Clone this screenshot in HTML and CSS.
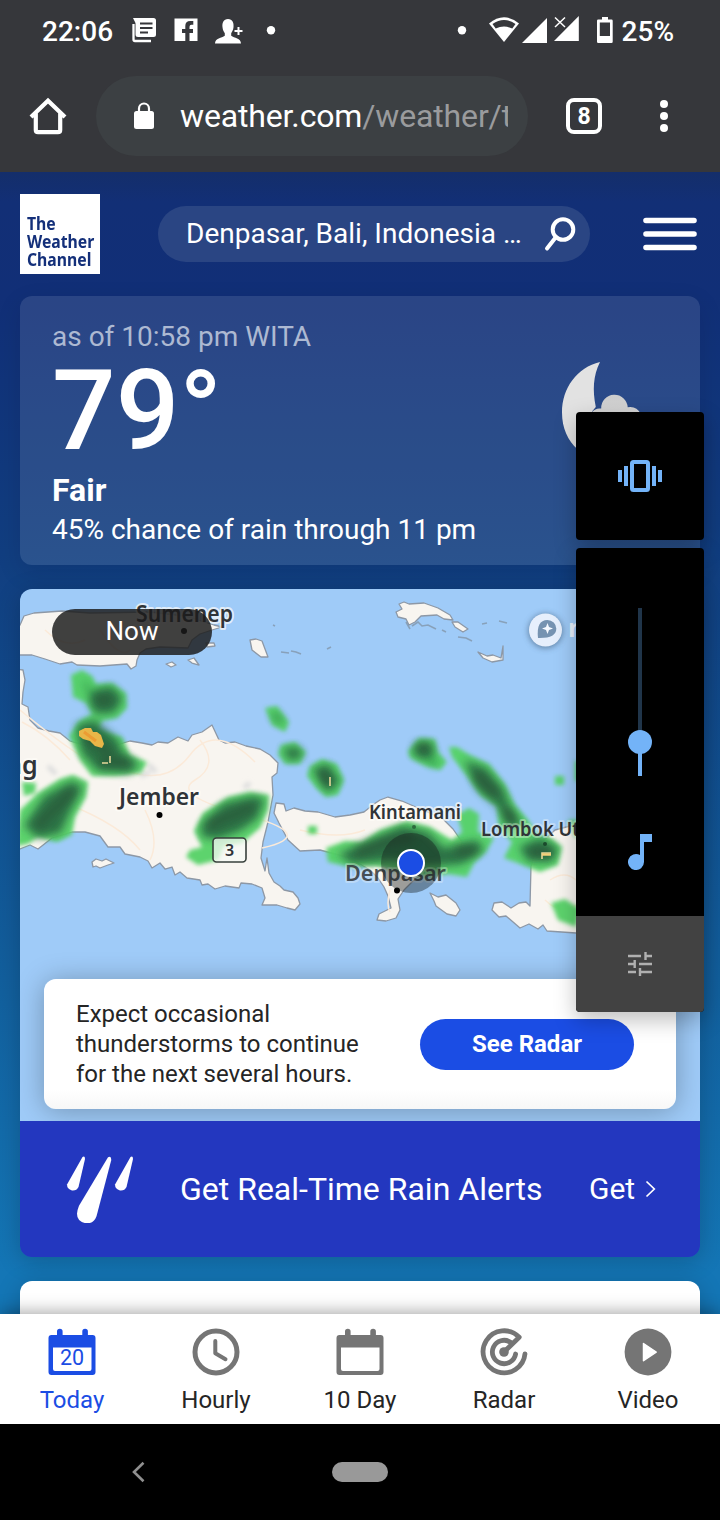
FILE: index.html
```html
<!DOCTYPE html>
<html lang="en">
<head>
<meta charset="utf-8">
<title>Denpasar, Bali, Indonesia - The Weather Channel</title>
<link rel="stylesheet" href="styles.css">
</head>
<body>
<div class="screen">
  <header class="chrome">
    <div class="status">
      <span class="status-text">22:06</span>
      <svg class="status-left" width="150" height="60" viewBox="126 0 150 60" fill="#fff">
        <path d="M133.500 24v15.500q0 1.500 1.500 1.500H151" fill="none" stroke="#fff" stroke-width="2.300"/>
        <path d="M133 18h20.500q2.500 0 2.500 2.500v14q0 2.500-2.500 2.500h-15.500q-2.500 0-2.500-2.500V23z"/>
        <path d="M140 23.500h12.500M140 28h12.500M140 32.500h8" stroke="#36373b" stroke-width="2"/>
        <path d="M174.500 18.500h23V41h-8v-8h3.500v-4h-3.500v-2.200q0-2 2-2h1.800V21h-3q-5 0-5 5v3H182v4h3.300v8h-10.800z"/>
        <path d="M228 19c4.500 0 6 3.800 5.500 8.300-.3 3-1.400 4.500-2.300 5.900v2.600c3 2.200 9.800 2.400 9.800 7.700h-26c0-5.300 6.800-5.500 9.800-7.700v-2.600c-1-1.400-2-2.900-2.300-5.900-.5-4.500 1-8.300 5.500-8.300z"/>
        <path d="M238.500 27v8M234.500 31h8" stroke="#fff" stroke-width="2"/>
        <circle cx="271" cy="30.200" r="4.200"/>
      </svg>
      <svg class="status-right" width="164" height="60" viewBox="456 0 164 60" fill="#fff">
        <circle cx="462" cy="30.200" r="4.200"/>
        <path d="M489 23.500Q504 11 519 23.500L504 42z"/>
        <path d="M492.500 24q11.500-8 23 0l-3.200 4.600q-8.300-4-16.600 0z" fill="#36373b"/>
        <path d="M547 18v25h-25z"/>
        <path d="M578.800 16v25H554z"/>
        <path d="M553 15h13v9l-7 6h-6z" fill="#36373b"/>
        <path d="M555 17.500l10 9.500M565 17.500L555 27" stroke="#fff" stroke-width="1.500"/>
        <path d="M602 17h6v2.500h3.500q1.200 0 1.200 1.200v21q0 1.200-1.200 1.200h-13.300q-1.200 0-1.200-1.200v-21q0-1.200 1.200-1.200h3.800zM599.800 22.500V36h10.200V22.500z" fill-rule="evenodd"/>
      </svg>
      <span class="status-text">25%</span>
    </div>
    <div class="toolbar">
      <svg width="40" height="40" viewBox="28 96 40 40" fill="none" stroke="#fff" stroke-width="4.200">
        <path d="M31 117l17-16.300L65 117M35.800 113v17q0 2.200 2.200 2.200h20q2.200 0 2.200-2.200v-17"/>
      </svg>
      <div class="url">
        <svg width="20" height="28" viewBox="134 102 20 28"><rect x="134" y="111" width="20" height="18" rx="2.500" fill="#fff"/><path d="M139 112v-3.500a5 5 0 0 1 10 0v3.500" fill="none" stroke="#fff" stroke-width="2.200"/></svg>
        <span class="url-text">weather.com<i>/weather/today</i></span>
      </div>
      <span class="tabs">8</span>
      <svg class="dots" width="8" height="32" viewBox="0 0 8 32" fill="#fff"><circle cx="4" cy="4" r="4"/><circle cx="4" cy="16" r="4"/><circle cx="4" cy="28" r="4"/></svg>
    </div>
  </header>

  <main class="page">
    <div class="masthead">
      <div class="logo"><span>The</span><span>Weather</span><span>Channel</span></div>
      <div class="search">
        <span>Denpasar, Bali, Indonesia …</span>
        <svg width="34" height="38" viewBox="543 215 34 38" fill="none" stroke="#fff" stroke-width="4" stroke-linecap="round"><circle cx="563" cy="229.500" r="10.300"/><path d="M556 237l-9 11.500"/></svg>
      </div>
      <svg class="burger" width="54" height="34" viewBox="0 0 54 34" stroke="#fff" stroke-width="5.600" stroke-linecap="round"><path d="M3 3.500h48M3 17h48M3 30.500h48"/></svg>
    </div>

    <section class="now-card">
      <div>
        <p class="asof">as of 10:58 pm WITA</p>
        <p class="temp">79°</p>
        <p class="phrase">Fair</p>
        <p class="rain">45% chance of rain through 11 pm</p>
      </div>
      <svg class="moon" width="112" height="112" viewBox="560 360 112 112">
        <defs><linearGradient id="cloud" x1="0" y1="0" x2="0" y2="1"><stop offset="0" stop-color="#cdcdcd"/><stop offset="1" stop-color="#e2e2e2"/></linearGradient></defs>
        <path d="M600 362C577 367.500 562 388 562 412.500C562 444 586 462 612 462L592 411.500L595.800 407C592.500 390 593 376 600 362z" fill="#e2e2e2"/>
        <path d="M592 412q4-4.500 9.200-3.400a13.200 13.200 0 0 1 26.500-1.300q9-1.500 13 6.700v30h-49z" fill="url(#cloud)"/>
      </svg>
    </section>

    <section class="radar-card">
      <div class="map">
        <svg class="map-art" width="680" height="532" viewBox="20 589 680 532">
          <defs>
            <filter id="soft" x="-20%" y="-20%" width="140%" height="140%"><feGaussianBlur stdDeviation="2.200"/></filter>
            <filter id="softer" x="-30%" y="-30%" width="160%" height="160%"><feGaussianBlur stdDeviation="4"/></filter>
            <filter id="glow" x="-50%" y="-50%" width="200%" height="200%"><feGaussianBlur stdDeviation="3"/></filter>
          </defs>
          <rect x="20" y="589" width="680" height="532" fill="#9fcbf8"/>
          <g fill="#f8f5f0" stroke="#8d98a6" stroke-width="1.300" stroke-linejoin="round">
            <path d="M10 640L20 625L24 616L34 613L62 611L90 613L150 612L185 616L214 625L222 627L212 630L200 634L192 640L188 648L160 647L146 649L140 653L137 660L136 666L131 669L127 664L100 666L77 665L72 662L60 664L45 659L32 655L10 655z"/>
            <path d="M10 668L23 670L25 680L23 692L22 704L28 707L30 720L38 728L49 731L60 733L70 741L100 750L130 741L142 743L152 745L158 742L168 743L178 737L188 741L192 735L202 732L212 725L219 740L225 743L235 742L246 746L260 749L270 755L278 763L277 773L272 777L273 795L268 822L263 842L261 858L265 871L267 858L269 873L274 882L280 886L284 890L293 892L298 898L300 904L295 910L287 908L277 905L262 905L265 898L262 888L252 884L241 883L239 888L225 886L215 889L208 884L202 885L200 880L187 878L180 872L175 875L172 867L165 869L160 863L152 868L148 861L140 857L125 854L120 847L108 847L100 836L85 832L72 832L52 838L38 849L30 845L20 849L10 849z"/>
            <path d="M276 803L284 804L286 811L294 808L305 811L318 812L335 817L350 815L364 812L374 804L380 800L388 797L402 801L425 811L443 819L453 829L462 842L460 855L440 866L424 872L412 882L404 890L398 899L400 910L396 918L386 921L377 920L379 914L391 908L388 896L384 887L378 878L370 870L350 858L320 850L300 851L288 840L279 823L274 813z"/>
            <path d="M430 893L438 897L446 895L456 903L460 910L456 916L447 914L436 906L434 901z"/>
            <path d="M531 866L530 906L526 902L519 903L511 908L502 902L494 903L492 910L499 917L506 916L520 928L529 924L538 929L543 925L547 931L576 933L640 933V818L600 818L555 830L536 848z"/>
            <path d="M396 612L402 609L399 604L404 602L409 604L424 603L438 608L450 615L453 620L444 619L437 615L421 616L415 622L409 625L406 619L398 617z"/>
            <path d="M452 622L458 622L468 629L463 632L455 627z"/>
            <path d="M478 652L487 656L493 655L501 658L503 646L503 660L492 662L483 658z"/>
            <path d="M250 640L256 639L262 641L268 657L261 657L252 650z"/>
            <path d="M92 862L96 859L102 861L106 859L110 861L114 863L108 865L100 868L96 866L93 867z"/>
            <path d="M166 664L172 662L176 665L171 667zM188 660L194 658L199 665L192 663zM206 643L214 643L215 646L207 647z"/>
          </g>
          <path d="M406 622l4 7M412 626l6-4 4 4 6-1 8 4M442 630l4 2M458 637l8 1 6 3M281 652l8 1M291 651l5 1 5 2M482 624l5-1M499 621l8 2M273 625l2 1M327 649l4-2" fill="none" stroke="#8296aa" stroke-width="1.600" opacity=".8"/>
          <g fill="none" stroke="#fbead9" stroke-width="1.500">
            <path d="M20 710Q50 735 75 752T120 768Q165 788 190 755T255 762M22 722Q48 735 70 760M70 805Q120 825 140 850M145 810Q160 840 150 860M200 740Q220 765 195 780T245 815T262 848M85 640Q65 650 45 630M100 630Q120 660 130 650M550 880Q565 870 576 880M545 900Q560 915 576 905M300 830Q340 840 365 830M390 890Q386 905 390 912"/>
          </g>
          <path d="M48 766l8 8M148 764l8 8M140 776l10-4M244 788l6-5" stroke="#dedede" stroke-width="5" filter="url(#soft)"/>
          <g filter="url(#soft)" fill="#55d266" opacity=".95">
            <path d="M71 675L82 670L92 676L96 684L112 683L126 693L127 708L117 718L102 721L98 730L122 737L130 755L147 762L141 773L115 776L92 776L80 760L69 736L79 721L92 714L86 703L73 697z"/>
            <path d="M20 810L38 793L60 779L73 775L88 782L86 797L75 817L72 835L57 842L38 837L28 844L16 846z"/>
            <path d="M22 782L36 783L35 793L24 796z"/>
            <path d="M203 813L228 797L250 792L269 795L268 810L260 828L242 843L224 846L218 860L198 865L186 857L190 850L202 847L194 831z"/>
            <path d="M265 708L277 706L289 722L285 732L272 725zM281 745L295 742L306 752L300 764L285 764L278 754z"/>
            <path d="M310 766L322 759L337 764L344 780L338 795L326 797L316 788L307 776z"/>
            <path d="M408 751L419 738L435 739L438 752L447 762L440 770L425 766L410 758z"/>
            <path d="M449 747L457 747L470 755L489 764L505 784L515 805L528 820L537 834L550 837L562 847L558 865L540 872L515 862L504 858L512 842L499 829L497 806L481 796L466 775L452 757z"/>
            <path d="M326 848L345 841L362 842L380 830L407 821L430 827L452 840L462 832L457 815L469 808L479 814L478 832L494 838L486 852L474 863L467 877L448 874L425 878L400 872L376 866L350 867L328 862z"/>
            <path d="M555 776h9v9h-9zM575 761h10v20h-10zM308 826h9v8h-9zM551 903L565 899L580 909L576 927L558 920zM568 820h20v17h-13z"/>
          </g>
          <g filter="url(#softer)" fill="#2b6f44" opacity=".97">
            <path d="M88 691L112 686L123 699L114 713L96 714L90 704zM76 725L94 720L117 739L123 753L139 764L130 773L98 771L82 754z"/>
            <path d="M24 826L44 796L72 781L83 787L70 812L61 833L38 838z"/>
            <path d="M201 824L224 803L254 796L265 799L257 819L240 831L218 839L202 837z"/>
            <path d="M283 748L299 747L303 757L289 761zM312 769L328 764L340 781L328 793zM415 743L431 742L435 754L424 760L413 754z"/>
            <path d="M428 758l9 7" stroke="#2f9a4d" stroke-width="6"/>
            <path d="M464 760L486 768L504 790L510 807L523 825L508 827L497 806L477 789z"/>
            <path d="M338 854L374 838L402 826L428 832L444 848L477 840L484 850L462 864L427 867L391 861L352 864z"/>
            <path d="M519 847L540 838L558 848L552 862L528 861z"/>
            <path d="M273 713l9 10" stroke="#33904e" stroke-width="6"/>
            <path d="M84 681l6 14" stroke="#3fae56" stroke-width="6"/>
          </g>
          <g filter="url(#softer)" fill="none" stroke="#2c5439" stroke-width="9" stroke-linecap="round" opacity=".7">
            <path d="M40 824L70 793M212 824L250 808M88 738L108 752M104 762H126M422 748h3M478 776L494 792M508 812l3 8M360 852L388 842L410 838M460 851h12M534 852h14M324 774l3 8M100 700h8"/>
          </g>
          <path d="M79 731L85 728L91 728L93 732L97 732L101 735L104 744L102 748L95 746L90 741L83 739L79 736z" fill="#e9b648"/>
          <path d="M84 732l12 9" stroke="#ec9c33" stroke-width="3"/>
          <path d="M102 763h6M110 756v7M330 777v9M542 859v-6h9" fill="none" stroke="#e6d79a" stroke-width="1.600"/>
          <path d="M542 854.500h9" stroke="#f3d07b" stroke-width="2.500"/>
          <rect x="213" y="838" width="33" height="24" rx="3.500" fill="#f7f9f5" fill-opacity=".75" stroke="#38403c" stroke-width="1.600"/>
          <g class="place" stroke="#fffdf8" stroke-width="4" stroke-opacity=".7" paint-order="stroke" stroke-linejoin="round">
            <text x="136" y="622" font-size="23" textLength="97" lengthAdjust="spacingAndGlyphs">Sumenep</text>
            <text x="119" y="805" font-size="23" textLength="80" lengthAdjust="spacingAndGlyphs">Jember</text>
            <text x="6" y="774" font-size="25">ng</text>
            <text x="369" y="819" font-size="19" textLength="92" lengthAdjust="spacingAndGlyphs">Kintamani</text>
            <text x="481" y="836" font-size="19" textLength="128" lengthAdjust="spacingAndGlyphs" stroke-opacity=".35">Lombok Utara</text>
            <text x="345" y="881" font-size="22" textLength="101" lengthAdjust="spacingAndGlyphs" stroke-opacity=".3" fill-opacity=".85">Denpasar</text>
          </g>
          <text class="place" x="225" y="856" font-size="16">3</text>
          <circle cx="184" cy="631" r="3"/><circle cx="159.500" cy="815" r="3"/><circle cx="397" cy="890.500" r="3"/><circle cx="545" cy="844" r="2" fill="#1b4a2c"/><circle cx="414" cy="827" r="2" fill="#2c6b3d"/>
          <circle cx="545.500" cy="631" r="17" fill="#44617d" opacity=".7" filter="url(#glow)"/>
          <circle cx="545.500" cy="630" r="16.500" fill="#e6effc"/>
          <path d="M538 638q-2-18 9.500-18a8.800 8.800 0 0 1 8.800 8.800q0 9.700-18.300 9.200z" fill="#7693b1"/>
          <path d="M547.500 623l1.500 4 4 1.500-4 1.500-1.500 4-1.500-4-4-1.500 4-1.500z" fill="#f5f9ff"/>
          <text x="568" y="637" class="brand">mapbox</text>
          <circle cx="411" cy="863" r="30" fill="#14181a" opacity=".4"/>
          <circle cx="411" cy="863" r="13" fill="#1b4de4" stroke="#fff" stroke-width="2"/>
        </svg>
        <span class="now-pill">Now</span>
        <div class="advice">
          <p>Expect occasional<br>thunderstorms to continue<br>for the next several hours.</p>
          <span class="button">See Radar</span>
        </div>
      </div>
      <div class="alerts">
        <svg width="68" height="68" viewBox="66 1155 68 68" fill="#fff">
          <path d="M82.500 1157q2.500-1.500 2.500 2l-6.500 28q-2 4-6.500 3.500-5-1.500-5-6z"/>
          <path d="M108 1157.200q3.500-2 3.200 3l-14.700 56q-3 8-11 7-8.500-2-8.500-9.500 0-3 2-8z"/>
          <path d="M130.500 1157q2.500-1.500 2.500 2l-6.500 28q-2 4-6.500 3.500-5-1.500-5-6z"/>
        </svg>
        <span class="alerts-title">Get Real-Time Rain Alerts</span>
        <span class="alerts-get">Get</span>
        <svg width="12" height="18" viewBox="0 0 12 18" fill="none" stroke="#fff" stroke-width="1.700"><path d="M1.500 1.500L9.300 9l-7.800 7.500"/></svg>
      </div>
    </section>
    <section class="next-card"></section>
  </main>

  <nav class="tabbar">
    <div class="tab active">
      <svg width="48" height="48" viewBox="0 0 48 48" fill="#1b4de4"><path d="M9 3.500a2.800 2.800 0 0 1 5.600 0V7h19.700V3.500a2.800 2.800 0 0 1 5.600 0V7H44.500q3 0 3 3v34q0 3-3 3h-41q-3 0-3-3V10q0-3 3-3H9zM5 19.500V41q0 2 2 2h34.500q2 0 2-2V19.500z" fill-rule="evenodd"/><text x="24" y="37" font-size="21.500" text-anchor="middle">20</text></svg>
      <span>Today</span>
    </div>
    <div class="tab">
      <svg width="48" height="48" viewBox="0 0 48 48" fill="none" stroke="#757575" stroke-width="5"><circle cx="24" cy="24" r="21"/><path d="M23.300 13v12.200l10.200 6" stroke-width="4" stroke-linecap="round" stroke-linejoin="round"/></svg>
      <span>Hourly</span>
    </div>
    <div class="tab">
      <svg width="48" height="48" viewBox="0 0 48 48" fill="#757575"><path d="M9 3.500a2.800 2.800 0 0 1 5.600 0V7h19.700V3.500a2.800 2.800 0 0 1 5.600 0V7H44.500q3 0 3 3v34q0 3-3 3h-41q-3 0-3-3V10q0-3 3-3H9zM5 19.500V41q0 2 2 2h34.500q2 0 2-2V19.500z" fill-rule="evenodd"/></svg>
      <span>10 Day</span>
    </div>
    <div class="tab">
      <svg width="48" height="48" viewBox="0 0 48 48" fill="none" stroke="#757575" stroke-width="4.800" stroke-linecap="round" stroke-linejoin="round"><path d="M45 25.800A21 21 0 1 1 39.200 9.200L24 24"/><path d="M35.600 26A11.700 11.700 0 1 1 30.500 14.200"/><circle cx="24" cy="24" r="4.800" fill="#757575" stroke="none"/></svg>
      <span>Radar</span>
    </div>
    <div class="tab">
      <svg width="48" height="48" viewBox="0 0 48 48"><circle cx="24" cy="24" r="23.400" fill="#757575"/><path d="M19.500 15.500v17.200l12.700-8.600z" fill="#fff" stroke="#fff" stroke-width="1.500" stroke-linejoin="round"/></svg>
      <span>Video</span>
    </div>
  </nav>

  <footer class="sysnav">
    <svg width="16" height="22" viewBox="0 0 16 22" fill="none" stroke="#8f8f8f" stroke-width="2.600"><path d="M12.500 1.800L3 11l9.500 9.200"/></svg>
    <span class="home-pill"></span>
  </footer>

  <div class="volume">
    <div class="ringer">
      <svg width="44" height="32" viewBox="0 0 44 32" fill="#73b3f8"><path d="M0 10h4v12H0zM6 6h4v20H6zM34 6h4v20h-4zM40 10h4v12h-4z"/><rect x="14" y="2" width="16" height="28" rx="1.500" fill="none" stroke="#73b3f8" stroke-width="4"/></svg>
    </div>
    <div class="slider">
      <svg width="24" height="168" viewBox="0 0 24 168"><path d="M10 0h4v124h-4z" fill="#20354a"/><path d="M10 134h4v34h-4z" fill="#73b3f8"/><circle cx="12" cy="134" r="12" fill="#73b3f8"/></svg>
      <svg class="note" width="24" height="36" viewBox="0 0 24 36" fill="#73b3f8"><path d="M12 0h12v8h-8v20a8 8 0 1 1-4-6.930z"/></svg>
      <div class="settings">
        <svg width="24" height="24" viewBox="0 0 24 24" stroke="#b0b0b0" stroke-width="2.400"><path d="M0 4h13M17.500 0v8M17.500 4H24M0 12h6M6.700 8v8M11 12h13M0 20h8M12 16v8M12 20h12"/></svg>
      </div>
    </div>
  </div>
</div>
</body>
</html>
```

FILE: styles.css
```css
* { box-sizing: border-box; }
body { margin: 0; font-family: Roboto, "Liberation Sans", sans-serif; color: #fff; }
p { margin: 0; }
svg { display: block; flex: none; }

.screen { position: relative; display: flex; flex-direction: column; width: 720px; height: 1520px; overflow: hidden; background: #000; }

.chrome { height: 172px; background: #36373b; }
.status { display: flex; height: 60px; padding: 0 46px 0 42px; }
.status-text { font-size: 28px; font-weight: 500; line-height: 63px; white-space: nowrap; }
.status-left { margin-left: 13px; }
.status-right { margin-left: auto; margin-right: 2px; }
.toolbar { display: flex; align-items: center; height: 112px; padding: 0 52px 0 28px; }
.url { display: flex; align-items: center; width: 432px; height: 80px; margin-left: 28px; padding-left: 38px; border-radius: 40px; background: #3c4043; }
.url-text { width: 328px; margin-left: 26px; overflow: hidden; font-size: 32px; letter-spacing: -.15px; line-height: 84px; white-space: nowrap; }
.url-text i { font-style: normal; color: #9a9b9d; }
.tabs { width: 36px; height: 36px; margin-left: 38px; border: 4px solid #fff; border-radius: 8px; font-size: 23px; font-weight: 700; line-height: 29px; text-align: center; }
.dots { margin-left: auto; }

.page { height: 1142px; padding: 0 20px; overflow: hidden; background: linear-gradient(#142e6a 0, #122f76 30px, #112f77 124px, #113e80 380px, #12609e 820px, #1476b6 1100px); }
.masthead { display: flex; align-items: center; height: 124px; }
.logo { display: flex; flex-direction: column; width: 80px; height: 80px; padding: 20px 0 0 7px; background: #fff; color: #14307a; font: 700 17.5px/18px "Noto Sans", sans-serif; }
.logo span { width: max-content; transform: scaleX(.9); transform-origin: left; }
.search { display: flex; align-items: center; width: 432px; height: 56px; margin-left: 58px; padding: 0 13px 0 28px; border-radius: 28px; background: #2a4583; font-size: 28px; }
.search span { padding-bottom: 2px; white-space: nowrap; }
.search svg { margin-left: auto; }
.burger { margin: 0 3px 0 auto; }

.now-card { display: flex; justify-content: space-between; height: 269px; padding: 23px 28px 0 32px; border-radius: 12px; background: rgba(255, 255, 255, .105); box-shadow: 0 8px 24px rgba(0, 0, 40, .12); }
.asof { height: 36px; font-size: 28px; line-height: 36px; color: #adb9d2; }
.temp { height: 110px; font-size: 112px; font-weight: 500; line-height: 112px; }
.phrase { margin-top: 6px; font-size: 32px; font-weight: 700; line-height: 38px; }
.rain { margin-top: 2px; font-size: 28px; line-height: 37px; white-space: nowrap; }
.moon { margin-top: 41px; }

.radar-card { height: 668px; margin-top: 24px; border-radius: 12px; overflow: hidden; }
.radar-card, .next-card { box-shadow: 0 4px 24px rgba(0, 0, 0, .2); }
.map { position: relative; display: flex; flex-direction: column; justify-content: space-between; height: 532px; padding: 20px 24px 12px; }
.map-art { position: absolute; inset: 0; }
.place { font-family: "Noto Sans", sans-serif; font-weight: 600; fill: #303438; }
.brand { font: 700 25px "Open Sans", sans-serif; fill: #e9f2fd; }
.now-pill { position: relative; width: 160px; height: 46px; margin-left: 8px; border-radius: 23px; background: rgba(27, 27, 27, .83); font-size: 26px; line-height: 45px; text-align: center; }
.advice { position: relative; display: flex; align-items: center; justify-content: space-between; height: 130px; padding: 0 42px 0 32px; border-radius: 12px; background: linear-gradient(#fff 85%, #f7f7f7); box-shadow: 0 2px 28px rgba(0, 0, 0, .28); color: #252525; font-size: 24px; line-height: 30px; white-space: nowrap; }
.button { width: 214px; height: 51px; border-radius: 26px; background: #1b4de4; color: #fff; font-weight: 700; line-height: 50px; text-align: center; }
.alerts { position: relative; display: flex; align-items: center; height: 136px; padding: 0 43px 0 46px; background: #2337bf; white-space: nowrap; }
.alerts-title { width: 409px; margin-left: 46px; font-size: 32px; }
.alerts-get { margin-right: auto; padding-bottom: 2px; font-size: 30px; }
.next-card { height: 60px; margin-top: 24px; border-radius: 12px; background: #fff; }

.tabbar { position: relative; display: flex; height: 110px; background: #fff; box-shadow: 0 -2px 16px rgba(0, 0, 0, .35); color: #252525; }
.tab { display: flex; flex: 1; flex-direction: column; align-items: center; padding-top: 14px; font-size: 24px; line-height: 48px; }
.active { color: #1b4de4; }

.sysnav { position: relative; display: flex; align-items: center; height: 96px; padding-left: 131px; background: #000; }
.home-pill { width: 56px; height: 20px; margin-left: 185px; border-radius: 10px; background: #999; }

.volume { position: absolute; top: 412px; left: 576px; display: flex; flex-direction: column; gap: 8px; width: 128px; }
.ringer, .slider { display: flex; align-items: center; border-radius: 4px; background: #000; box-shadow: 0 8px 22px rgba(0, 0, 0, .26); }
.ringer { justify-content: center; height: 128px; }
.slider { flex-direction: column; height: 464px; padding-top: 60px; overflow: hidden; }
.note { margin-top: 58px; }
.settings { display: flex; align-items: center; justify-content: center; width: 128px; height: 96px; margin-top: auto; background: #424242; }
```
